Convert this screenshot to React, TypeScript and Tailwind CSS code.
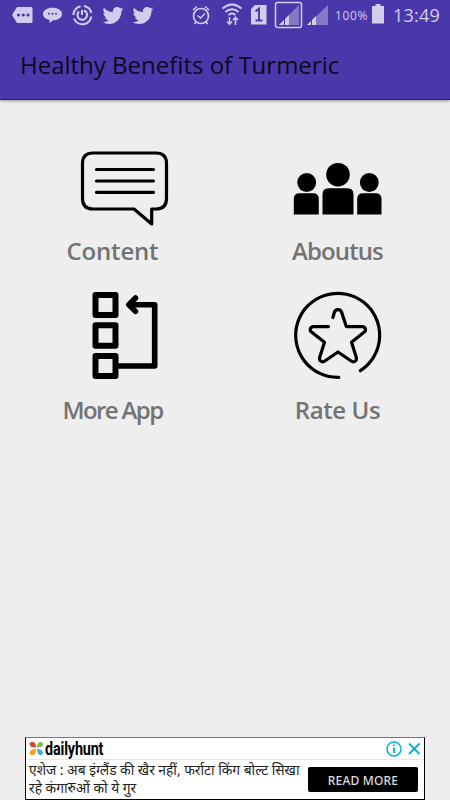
import React from 'react';
import { FaTwitter } from 'react-icons/fa';

const ContentIcon = () => (
  <svg className="h-[90px] w-[90px]" viewBox="80 145 90 90" fill="none" stroke="#000" strokeLinecap="round" strokeLinejoin="round">
    <path d="M93 153H156Q166.500 153 166.500 163.500V198.500Q166.500 209 156 209H151.700V224L134 209H93Q82.500 209 82.500 198.500V163.500Q82.500 153 93 153Z" strokeWidth="3.200" />
    <path d="M96.500 169.500H153.500M96.500 181H153.500M96.500 192.300H153.500" strokeWidth="3.200" />
  </svg>
);

const AboutIcon = () => (
  <svg className="h-[90px] w-[90px]" viewBox="292.500 145 90 90" fill="#000">
    <circle cx="306.200" cy="182.500" r="9.400" />
    <circle cx="337.500" cy="174.700" r="11.800" />
    <circle cx="368.800" cy="182.500" r="9.400" />
    <path d="M293.300 214.500V199Q293.300 193.300 299 193.300H312.500Q318.300 193.300 318.300 199V214.500Z" />
    <path d="M322 214.500V194.500Q322 188.300 328.200 188.300H346.700Q353 188.300 353 194.500V214.500Z" />
    <path d="M356.700 214.500V199Q356.700 193.300 362.500 193.300H375Q381 193.300 381 199V214.500Z" />
  </svg>
);

const MoreIcon = () => (
  <svg className="h-[90px] w-[90px]" viewBox="80 290 90 90" fill="none" stroke="#000" strokeLinejoin="round" strokeLinecap="round">
    <path d="M95.500 295H115.500V315H95.500ZM95.500 325.300H115.500V345.800H95.500ZM95.500 356H115.500V376H95.500Z" strokeWidth="6" />
    <path d="M117 366H154.700V304.700H132" strokeWidth="5.600" />
    <path d="M135.500 298L128.800 304.700L135.500 311.400" strokeWidth="5.500" />
    <path d="M135 299V310L129 304.700Z" fill="#000" stroke="none" />
  </svg>
);

const RateIcon = () => (
  <svg className="h-[90px] w-[90px]" viewBox="292.500 290 90 90" fill="none" stroke="#000" strokeWidth="3.200" strokeLinecap="round" strokeLinejoin="round">
    <path d="M338.300 377.300A42 42 0 1 1 359.800 370.700" />
    <path d="M332.400 317.500L333.800 312.500C335 308.600 340 308.600 341.200 312.500L345.800 326.600H361.500C365 326.600 366.200 330.300 363.500 332.300L351 342.300L355.700 357C356.800 361 353.500 363 350.300 360.800L337.500 352L324.700 360.800C321.500 363 318.200 361 319.300 357L324 342.300L311.300 332.300C308.500 330.300 309.700 326.600 313.200 326.600H328" />
  </svg>
);

interface MenuItemProps {
  label: string;
  icon: React.ReactNode;
  iconClass?: string;
  labelClass: string;
}

const MenuItem: React.FC<MenuItemProps> = ({ label, icon, iconClass = '', labelClass }) => (
  <div className="flex h-[145px] flex-col items-center">
    <div className={iconClass}>{icon}</div>
    <span className={`whitespace-nowrap text-[24px] font-semibold leading-[32px] text-[#737373] ${labelClass}`}>{label}</span>
  </div>
);

const StatusBar = () => (
  <div className="flex h-[30px] text-[#d3cdec]">
    <svg className="h-[30px] w-[98px]" viewBox="0 0 98 30" fill="currentColor">
      <path d="M17 7H31Q32.500 7 32.500 8.500V21.500Q32.500 23 31 23H17L12 15Z" />
      <g fill="#4a38ab">
        <circle cx="18.500" cy="15" r="1.600" />
        <circle cx="23.300" cy="15" r="1.600" />
        <circle cx="28" cy="15" r="1.600" />
      </g>
      <path d="M52.500 7.700C58 7.700 62 10.300 62 14S58 20.300 53 20.300L49.500 23V20C45.500 19 43 17 43 14C43 10.300 47 7.700 52.500 7.700Z" />
      <g fill="#4a38ab">
        <circle cx="49" cy="13.700" r="1" />
        <circle cx="52.500" cy="13.700" r="1" />
        <circle cx="56" cy="13.700" r="1" />
      </g>
      <g fill="none" stroke="currentColor">
        <path d="M84 6A9 9 0 0 1 91.300 13M91.300 16.500A9 9 0 0 1 74 18.500M73.400 15A9 9 0 0 1 80.500 6.200" strokeWidth="2" />
        <path d="M79 11.500A4.800 4.800 0 1 0 84 10.500M82 10V15" strokeWidth="2" />
      </g>
    </svg>
    <div className="flex w-[92px] items-center gap-[8px] pl-[4px]">
      <FaTwitter className="h-[21px] w-[22px]" />
      <FaTwitter className="h-[21px] w-[22px]" />
    </div>
    <svg className="h-[30px] w-[144px]" viewBox="190 0 144 30" fill="none" stroke="currentColor">
      <circle cx="201" cy="16" r="7.500" strokeWidth="1.700" />
      <path d="M193 10L197 6.500M205 6.500L209 10M196 22L194.500 24M206 22L207.500 24M197.500 15.500L200.500 18L205 13.500" strokeWidth="1.500" />
      <path d="M222.500 8.500Q232 .5 241.500 8.500M225.500 12Q232 6.500 238.500 12M228.500 15Q232 12 235.500 15" strokeWidth="2" />
      <path d="M229.500 17V24M227 21.500L229.500 24L232 21.500M235.500 25V17.500M233 20L235.500 17.500L238 20" strokeWidth="1.600" />
      <path d="M255 5H266.500V24.500H251V9Z" fill="currentColor" stroke="none" />
      <path d="M255.500 11.500L259 8.500V20.500M255.500 20.500H262.500" stroke="#4a38ab" strokeWidth="1.900" />
      <rect x="275.500" y="2.500" width="26" height="25" rx="2" strokeWidth="1.500" />
      <path d="M279 25L299 5V25Z" fill="#8578c6" stroke="none" />
      <path d="M279 25L289 15V25Z" fill="currentColor" stroke="none" />
      <path d="M284.500 18V25" stroke="#4a38ab" />
      <path d="M307 25L328 5V25Z" fill="#8578c6" stroke="none" />
      <path d="M307 25L316 16V25Z" fill="currentColor" stroke="none" />
      <path d="M311.500 18V25" stroke="#4a38ab" />
    </svg>
    <span className="w-[37px] whitespace-nowrap pl-[1px] text-[12px] leading-[31px] tracking-[0.6px]">100%</span>
    <svg className="h-[30px] w-[14px]" viewBox="0 0 14 30" fill="currentColor">
      <path d="M4.500 4H9.500V6H13V23.500H1V6H4.500Z" />
    </svg>
    <span className="whitespace-nowrap pl-[8px] text-[18px] leading-[31px] tracking-[0.2px]">13:49</span>
  </div>
);

const AdBanner = () => (
  <div className="mx-auto h-[63px] w-[400px] border border-black border-t-[#777] bg-white text-black">
    <div className="flex h-[22px] items-center justify-between border-b border-[#e8e8e8] pl-[3px] pr-[3px]">
      <div className="flex items-center gap-[1px]">
        <svg className="h-[15px] w-[15px]" viewBox="0 0 15 15">
          <path d="M.5 3Q.5 1 2.500 1H4.500Q7 2 7 6.500Q1 7 .5 3Z" fill="#da432d" />
          <path d="M14 3Q14 1 12 1H10.500Q8 2 8 6.500Q14 7 14 3Z" fill="#7fc241" />
          <path d="M.5 12Q.5 14 2.500 14H4.500Q7 13 7 8Q1 8 .5 12Z" fill="#f3a01c" />
          <path d="M14 12Q14 14 12 14H10.500Q8 13 8 8Q14 8 14 12Z" fill="#48add0" />
        </svg>
        <span className="origin-left scale-x-[0.8] whitespace-nowrap font-['Roboto',sans-serif] text-[18px] font-bold leading-[20px] tracking-[-0.2px]">dailyhunt</span>
      </div>
      <svg className="h-[18px] w-[36px]" viewBox="0 0 36 18" fill="none" stroke="#00b4d8" strokeWidth="1.500">
        <circle cx="9" cy="9" r="7" />
        <path d="M9 7.500V13M9 4.500V6" strokeWidth="1.800" />
        <path d="M24 3.500L34.500 14M34.500 3.500L24 14" strokeWidth="1.800" />
      </svg>
    </div>
    <div className="flex h-[39px] justify-between pl-[3px] pr-[6px]">
      <p className="whitespace-nowrap pt-[1px] font-['Noto_Sans','Noto_Sans_Devanagari',sans-serif] text-[13.8px] leading-[18px] text-[#222]">
        एशेज : अब इंग्लैंड की खैर नहीं, फर्राटा किंग बोल्ट सिखा
        <br />
        रहे कंगारुओं को ये गुर
      </p>
      <div className="mt-[7px] flex h-[25px] w-[110px] shrink-0 items-center justify-center rounded-[2px] bg-black pt-[2px] font-['Noto_Sans',sans-serif] text-[12px] font-medium tracking-[0.2px] text-[#ddd]">
        READ MORE
      </div>
    </div>
  </div>
);

const App: React.FC = () => {
  return (
    <div className="flex h-[800px] w-[450px] flex-col overflow-hidden bg-[#eee] font-['Open_Sans',sans-serif]">
      <header className="h-[100px] shrink-0 border-b border-[#3210a0] bg-[#4a38ab] shadow-[0_1px_3px_rgba(0,0,0,0.4)]">
        <StatusBar />
        <h1 className="whitespace-nowrap pl-[20px] text-[24px] leading-[70px] text-[#0c0920]">Healthy Benefits of Turmeric</h1>
      </header>

      <main className="grid flex-1 grid-cols-2 content-start pt-[45px]">
        <MenuItem label="Content" icon={<ContentIcon />} iconClass="pl-[25px]" labelClass="tracking-[-0.2px]" />
        <MenuItem label="Aboutus" icon={<AboutIcon />} labelClass="tracking-[-0.9px]" />
        <MenuItem label="More App" icon={<MoreIcon />} iconClass="pl-[25px]" labelClass="pt-[14px] tracking-[-1.600px]" />
        <MenuItem label="Rate Us" icon={<RateIcon />} labelClass="pt-[14px] tracking-[-0.4px]" />
      </main>

      <AdBanner />
    </div>
  );
};

export default App;
